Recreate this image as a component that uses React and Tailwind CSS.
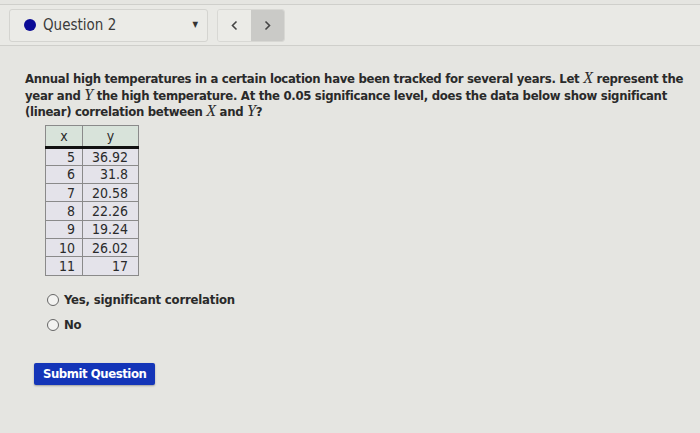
import React, { useState } from "react";

const ROWS = [
  ["5", "36.92"],
  ["6", "31.8"],
  ["7", "20.58"],
  ["8", "22.26"],
  ["9", "19.24"],
  ["10", "26.02"],
  ["11", "17"],
];

const M = ({ children }) => (
  <span className="text-[16px] leading-none italic font-normal" style={{ fontFamily: '"Liberation Serif", serif' }}>
    {children}
  </span>
);

const App = () => {
  const [answer, setAnswer] = useState(null);

  return (
    <div
      className="w-[700px] h-[433px] overflow-hidden bg-[#e5e5e1] text-[#2a2a2a]"
      style={{ fontFamily: '"DejaVu Sans Condensed", "DejaVu Sans", sans-serif' }}
    >
      {/* header bar */}
      <div className="mt-[4px] h-[42px] border-y border-[#cfcfcb] bg-[#e9e9e5] flex items-center pl-[9px] gap-[9px]">
        <div className="w-[199px] h-[33px] border border-[#d4d4d0] rounded-[3px] bg-[#ebebe7] flex items-center pl-[14px] pr-[9px]">
          <span className="w-[12px] h-[12px] rounded-full bg-[#0b0b96]" />
          <span className="ml-[7px] text-[15px] text-[#3a3a3a]">Question 2</span>
          <span className="ml-auto text-[8px] text-[#333]">▼</span>
        </div>
        <div className="flex h-[33px] border border-[#d8d8d4] rounded-[3px] overflow-hidden">
          <button className="w-[33px] bg-[#ebebe7] flex items-center justify-center">
            <svg width="9" height="11" viewBox="0 0 9 11">
              <path d="M6.5 1.5 L2.5 5.5 L6.5 9.5" fill="none" stroke="#444" strokeWidth="1.6" />
            </svg>
          </button>
          <button className="w-[33px] bg-[#cacac7] flex items-center justify-center">
            <svg width="9" height="11" viewBox="0 0 9 11">
              <path d="M2.5 1.5 L6.5 5.5 L2.5 9.5" fill="none" stroke="#444" strokeWidth="1.6" />
            </svg>
          </button>
        </div>
      </div>

      {/* question */}
      <div className="pl-[25px] pr-[4px] pt-[24px]">
        <p className="text-[13px] leading-[15.5px] font-semibold tracking-[-0.3px] text-[#2a2a2a] whitespace-nowrap">
          Annual high temperatures in a certain location have been tracked for several years. Let <M>X</M> represent the
          <br />
          year and <M>Y</M> the high temperature. At the 0.05 significance level, does the data below show significant
          <br />
          (linear) correlation between <M>X</M> and <M>Y</M>?
        </p>

        <table className="mt-[5px] ml-[20px] border-collapse text-[14px] text-[#2a2a2a]">
          <thead>
            <tr className="bg-[#d8e3da] h-[22px]">
              <th className="w-[37px] border border-[#8a8a8a] border-b-[3px] border-b-[#111] font-normal text-center leading-none">
                x
              </th>
              <th className="w-[56px] border border-[#8a8a8a] border-b-[3px] border-b-[#111] font-normal text-center leading-none">
                y
              </th>
            </tr>
          </thead>
          <tbody className="bg-[#e4e3ea]">
            {ROWS.map(([x, y]) => (
              <tr key={x} className="h-[18.3px]">
                <td className="border border-[#8a8a8a] text-right pr-[7px] leading-none">{x}</td>
                <td className="border border-[#8a8a8a] text-right pr-[10px] leading-none">{y}</td>
              </tr>
            ))}
          </tbody>
        </table>

        <div className="mt-[15px] ml-[22px] flex flex-col gap-[7px] text-[13px] font-semibold tracking-[-0.2px] text-[#2a2a2a]">
          {["Yes, significant correlation", "No"].map((label) => (
            <label key={label} className="flex items-center gap-[5px] cursor-pointer leading-[18px]" onClick={() => setAnswer(label)}>
              <span className="w-[12px] h-[12px] rounded-full border border-[#666] bg-[#f3f3f1] flex items-center justify-center">
                {answer === label && <span className="w-[6px] h-[6px] rounded-full bg-[#333]" />}
              </span>
              {label}
            </label>
          ))}
        </div>

        <button className="mt-[29px] ml-[9px] h-[22px] px-[9px] rounded-[2px] bg-[#1435b8] text-white text-[13px] font-bold tracking-[-0.45px] shadow-[0_1px_2px_rgba(0,0,0,0.3)]">
          Submit Question
        </button>
      </div>
    </div>
  );
};

export default App;
